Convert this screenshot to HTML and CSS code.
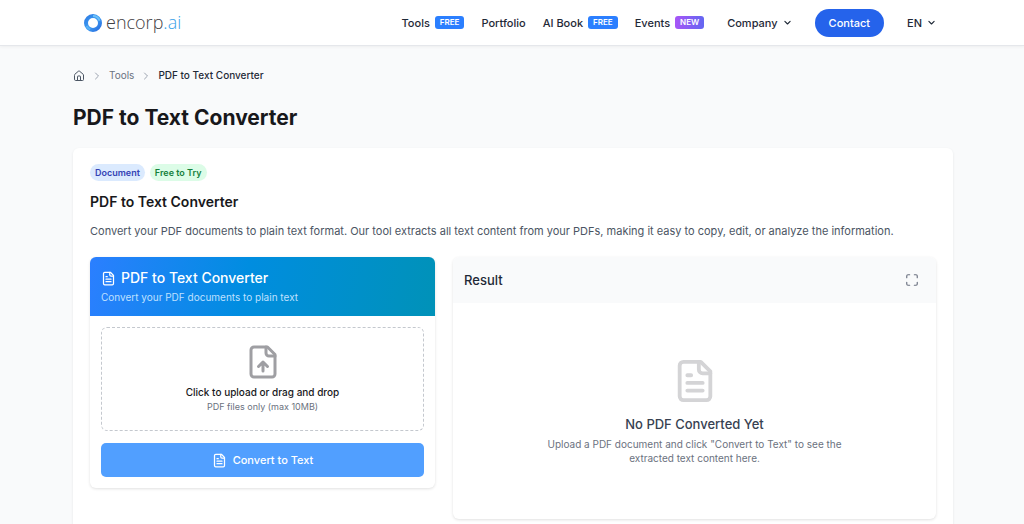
FILE: index.html
```
<!DOCTYPE html>
<html lang="en">
    <head>
        <meta charset="utf-8">
        <meta name="viewport" content="width=device-width, initial-scale=1">
        <title>PDF to Text Converter</title>
        <link rel="stylesheet" href="styles.css">
    </head>
    <body>
        <header class="site-header">
            <div class="site-header-inner">
                <a class="logo" href="#">
                    <svg class="logo-mark" viewBox="0 0 18 18" fill="none" aria-hidden="true">
                        <defs>
                            <linearGradient id="ring" x1="0" y1="0" x2="1" y2="1">
                                <stop offset="0" stop-color="#2f7de4"/>
                                <stop offset="0.5" stop-color="#3d9cf2"/>
                                <stop offset="1" stop-color="#2a6fe0"/>
                            </linearGradient>
                        </defs>
                        <circle cx="9" cy="9" r="7" stroke="url(#ring)" stroke-width="4"/>
                        <path d="M9 2a7 7 0 0 1 6.6 4.8" stroke="#6cc0f8" stroke-width="2"/>
                        <path d="M2.6 12a7 7 0 0 0 3.6 3.4" stroke="#5ab2f6" stroke-width="2"/>
                    </svg>
                    <span class="logo-text">encorp<span class="logo-suffix">.ai</span></span>
                </a>

                <nav class="nav">
                    <a href="#">Tools <span class="tag">FREE</span></a>
                    <a href="#">Portfolio</a>
                    <a href="#">AI Book <span class="tag">FREE</span></a>
                    <a href="#">Events <span class="tag tag-new">NEW</span></a>
                    <div class="nav-actions">
                        <button type="button" class="nav-menu">
                            Company
                            <svg class="chevron" viewBox="0 0 24 24" aria-hidden="true"><path d="m5 9 7 7 7-7"/></svg>
                        </button>
                        <a class="contact" href="#">Contact</a>
                        <button type="button" class="nav-menu">
                            EN
                            <svg class="chevron" viewBox="0 0 24 24" aria-hidden="true"><path d="m5 9 7 7 7-7"/></svg>
                        </button>
                    </div>
                </nav>
            </div>
        </header>

        <main class="page">
            <nav class="breadcrumb" aria-label="Breadcrumb">
                <a href="#" aria-label="Home">
                    <svg class="icon-home" viewBox="0 0 24 24" aria-hidden="true">
                        <path d="M15 21v-8a1 1 0 0 0-1-1h-4a1 1 0 0 0-1 1v8"/>
                        <path d="M3 10a2 2 0 0 1 .7-1.5l7-6a2 2 0 0 1 2.6 0l7 6A2 2 0 0 1 21 10v9a2 2 0 0 1-2 2H5a2 2 0 0 1-2-2z"/>
                    </svg>
                </a>
                <svg class="separator" viewBox="0 0 24 24" aria-hidden="true"><path d="m9 18 6-6-6-6"/></svg>
                <a href="#">Tools</a>
                <svg class="separator" viewBox="0 0 24 24" aria-hidden="true"><path d="m9 18 6-6-6-6"/></svg>
                <span class="current" aria-current="page">PDF to Text Converter</span>
            </nav>

            <h1>PDF to Text Converter</h1>

            <section class="card">
                <div class="badges">
                    <span class="badge badge-blue">Document</span>
                    <span class="badge badge-green">Free to Try</span>
                </div>
                <h2>PDF to Text Converter</h2>
                <p class="description">Convert your PDF documents to plain text format. Our tool extracts all text content from your PDFs, making it easy to copy, edit, or analyze the information.</p>

                <div class="columns">
                    <form class="panel">
                        <div class="tool-header">
                            <h3>
                                <svg class="icon-file" viewBox="0 0 24 24" aria-hidden="true">
                                    <path d="M15 2H6a2 2 0 0 0-2 2v16a2 2 0 0 0 2 2h12a2 2 0 0 0 2-2V7z"/>
                                    <path d="M14 2v4a2 2 0 0 0 2 2h4M10 9H8M16 13H8M16 17H8"/>
                                </svg>
                                PDF to Text Converter
                            </h3>
                            <p>Convert your PDF documents to plain text</p>
                        </div>
                        <div class="tool-body">
                            <label class="dropzone">
                                <input class="file-input" type="file" accept="application/pdf">
                                <svg class="icon-upload" viewBox="0 0 24 24" aria-hidden="true">
                                    <path d="M15 2H6a2 2 0 0 0-2 2v16a2 2 0 0 0 2 2h12a2 2 0 0 0 2-2V7z"/>
                                    <path d="M14 2v4a2 2 0 0 0 2 2h4M12 12v6M15 15l-3-3-3 3"/>
                                </svg>
                                <span class="dropzone-title">Click to upload or drag and drop</span>
                                <span class="dropzone-hint">PDF files only (max 10MB)</span>
                            </label>
                            <button type="button" class="convert">
                                <svg class="icon-file" viewBox="0 0 24 24" aria-hidden="true">
                                    <path d="M15 2H6a2 2 0 0 0-2 2v16a2 2 0 0 0 2 2h12a2 2 0 0 0 2-2V7z"/>
                                    <path d="M14 2v4a2 2 0 0 0 2 2h4M10 9H8M16 13H8M16 17H8"/>
                                </svg>
                                Convert to Text
                            </button>
                        </div>
                    </form>

                    <section class="panel">
                        <div class="result-header">
                            <h3>Result</h3>
                            <button type="button" class="expand" aria-label="Full screen">
                                <svg viewBox="0 0 24 24" aria-hidden="true">
                                    <path d="M8 3H5a2 2 0 0 0-2 2v3M21 8V5a2 2 0 0 0-2-2h-3M3 16v3a2 2 0 0 0 2 2h3M16 21h3a2 2 0 0 0 2-2v-3"/>
                                </svg>
                            </button>
                        </div>
                        <div class="empty">
                            <svg class="icon-empty" viewBox="0 0 24 24" aria-hidden="true">
                                <path d="M15 2H6a2 2 0 0 0-2 2v16a2 2 0 0 0 2 2h12a2 2 0 0 0 2-2V7z"/>
                                <path d="M14 2v4a2 2 0 0 0 2 2h4M10 9H8M16 13H8M16 17H8"/>
                            </svg>
                            <h4>No PDF Converted Yet</h4>
                            <p>Upload a PDF document and click "Convert to Text" to see the extracted text content here.</p>
                        </div>
                    </section>
                </div>
            </section>
        </main>
    </body>
</html>
```
FILE: styles.css
```
* {
    box-sizing: border-box;
}

body {
    margin: 0;
    background: #f9fafb;
    color: #1f2937;
    font-family: Inter, "Liberation Sans", sans-serif;
    font-size: 11px;
    line-height: 16px;
}

h1, h2, h3, h4, p {
    margin: 0;
}

a {
    color: inherit;
    text-decoration: none;
}

button {
    padding: 0;
    border: 0;
    background: none;
    color: inherit;
    font: inherit;
    cursor: pointer;
}

svg {
    display: block;
    flex: none;
    fill: none;
    stroke: currentColor;
    stroke-width: 2;
    stroke-linecap: round;
    stroke-linejoin: round;
}

/* Header */

.site-header {
    border-bottom: 1px solid #e5e7eb;
    background: white;
    box-shadow: 0 1px 3px rgba(0, 0, 0, 0.05);
}

.site-header-inner {
    display: flex;
    align-items: center;
    justify-content: space-between;
    max-width: 856px;
    height: 45px;
    margin: 0 auto;
    padding-right: 4px;
}

.logo {
    display: flex;
    align-items: center;
    gap: 4px;
}

.logo-mark {
    width: 18px;
    height: 18px;
    stroke: none;
    stroke-linecap: butt;
}

.logo-text {
    color: #3f4043;
    font-family: "Open Sans", sans-serif;
    font-size: 18px;
    font-weight: 300;
    line-height: 22px;
    padding-bottom: 2px;
}

.logo-suffix {
    color: #36a1e8;
}

.nav {
    display: flex;
    align-items: center;
    gap: 17px;
    font-weight: 500;
}

.nav > a, .nav-menu {
    display: flex;
    align-items: center;
    gap: 5px;
}

.nav-actions {
    display: flex;
    align-items: center;
    gap: 23px;
    margin-left: 6px;
}

.tag {
    padding: 0 5px;
    border-radius: 3px;
    background: #2b7fff;
    color: white;
    font-size: 8px;
    font-weight: 600;
    line-height: 13px;
}

.tag-new {
    background: linear-gradient(to right, #a855f7, #6366f1);
}

.chevron {
    width: 9px;
    height: 9px;
    stroke-width: 3;
}

.contact {
    padding: 6px 14px;
    border-radius: 14px;
    background: #2563eb;
    color: white;
}

/* Page */

.page {
    max-width: 912px;
    margin: 0 auto;
    padding: 22px 15px 22px 17px;
}

.breadcrumb {
    display: flex;
    align-items: center;
    gap: 6px;
    color: #6b7280;
    font-size: 10px;
    line-height: 15px;
}

.icon-home {
    width: 12px;
    height: 12px;
    color: #4b5563;
}

.separator {
    width: 12px;
    height: 12px;
    color: #9ca3af;
}

.current {
    color: #1f2937;
    font-weight: 500;
}

h1 {
    margin: 20px 0 15px;
    color: #18181b;
    font-size: 21px;
    font-weight: 700;
    line-height: 30px;
}

.card {
    padding: 16px 17px;
    border-radius: 6px;
    background: white;
    box-shadow: 0 1px 3px rgba(0, 0, 0, 0.08);
}

.badges {
    display: flex;
    gap: 5px;
}

.badge {
    padding: 0 5px;
    border-radius: 9px;
    font-size: 9px;
    font-weight: 600;
    line-height: 17px;
}

.badge-blue {
    background: #dbeafe;
    color: #3443b5;
}

.badge-green {
    background: #dcfce7;
    color: #15803d;
}

h2 {
    margin: 11px 0;
    color: #18181b;
    font-size: 14px;
    font-weight: 600;
    line-height: 20px;
}

.description {
    margin-bottom: 18px;
    color: #4b5563;
}

.columns {
    display: grid;
    grid-template-columns: 5fr 7fr;
    gap: 18px;
    align-items: start;
}

.panel {
    overflow: hidden;
    border-radius: 6px;
    background: white;
    box-shadow: 0 1px 3px rgba(0, 0, 0, 0.12);
}

/* Converter form */

.tool-header {
    padding: 11px;
    background: linear-gradient(100deg, #2b7fff, #008de0 45%, #0092b8);
    color: white;
}

.tool-header h3 {
    display: flex;
    align-items: center;
    gap: 5px;
    font-size: 14px;
    font-weight: 500;
    line-height: 20px;
}

.tool-header p {
    margin-top: 2px;
    color: #bfe0ff;
    font-size: 10px;
    line-height: 15px;
}

.icon-file {
    width: 15px;
    height: 15px;
}

.tool-body {
    display: grid;
    gap: 12px;
    padding: 11px;
}

.dropzone {
    position: relative;
    display: flex;
    flex-direction: column;
    align-items: center;
    padding: 16px;
    border: 1px dashed #c4c8ce;
    border-radius: 6px;
    cursor: pointer;
}

/* Invisible, spread over the whole drop area */
.file-input {
    position: absolute;
    inset: 0;
    width: 100%;
    opacity: 0;
}

.icon-upload {
    width: 36px;
    height: 36px;
    color: #9f9fa3;
}

.dropzone-title {
    margin-top: 4px;
    color: #18181b;
    font-size: 10px;
    font-weight: 500;
}

.dropzone-hint {
    color: #6b7280;
    font-size: 9px;
    line-height: 14px;
}

.convert {
    display: flex;
    align-items: center;
    justify-content: center;
    gap: 6px;
    padding: 9px;
    border-radius: 5px;
    background: #519fff;
    color: white;
    font-weight: 500;
}

/* Result */

.result-header {
    display: flex;
    align-items: center;
    justify-content: space-between;
    padding: 13px 17px 13px 11px;
    background: #f9fafb;
}

.result-header h3 {
    font-size: 13px;
    font-weight: 500;
    line-height: 20px;
}

.expand {
    color: #6b7280;
}

.expand svg {
    width: 14px;
    height: 14px;
}

.empty {
    display: flex;
    flex-direction: column;
    align-items: center;
    padding: 55px 16px 54px;
    color: #6b7280;
    text-align: center;
}

.icon-empty {
    width: 46px;
    height: 46px;
    color: #d4d4d6;
}

.empty h4 {
    margin: 10px 0 3px;
    color: #374151;
    font-size: 13px;
    font-weight: 500;
    line-height: 20px;
}

.empty p {
    max-width: 320px;
    font-size: 10px;
    line-height: 14px;
}
```
